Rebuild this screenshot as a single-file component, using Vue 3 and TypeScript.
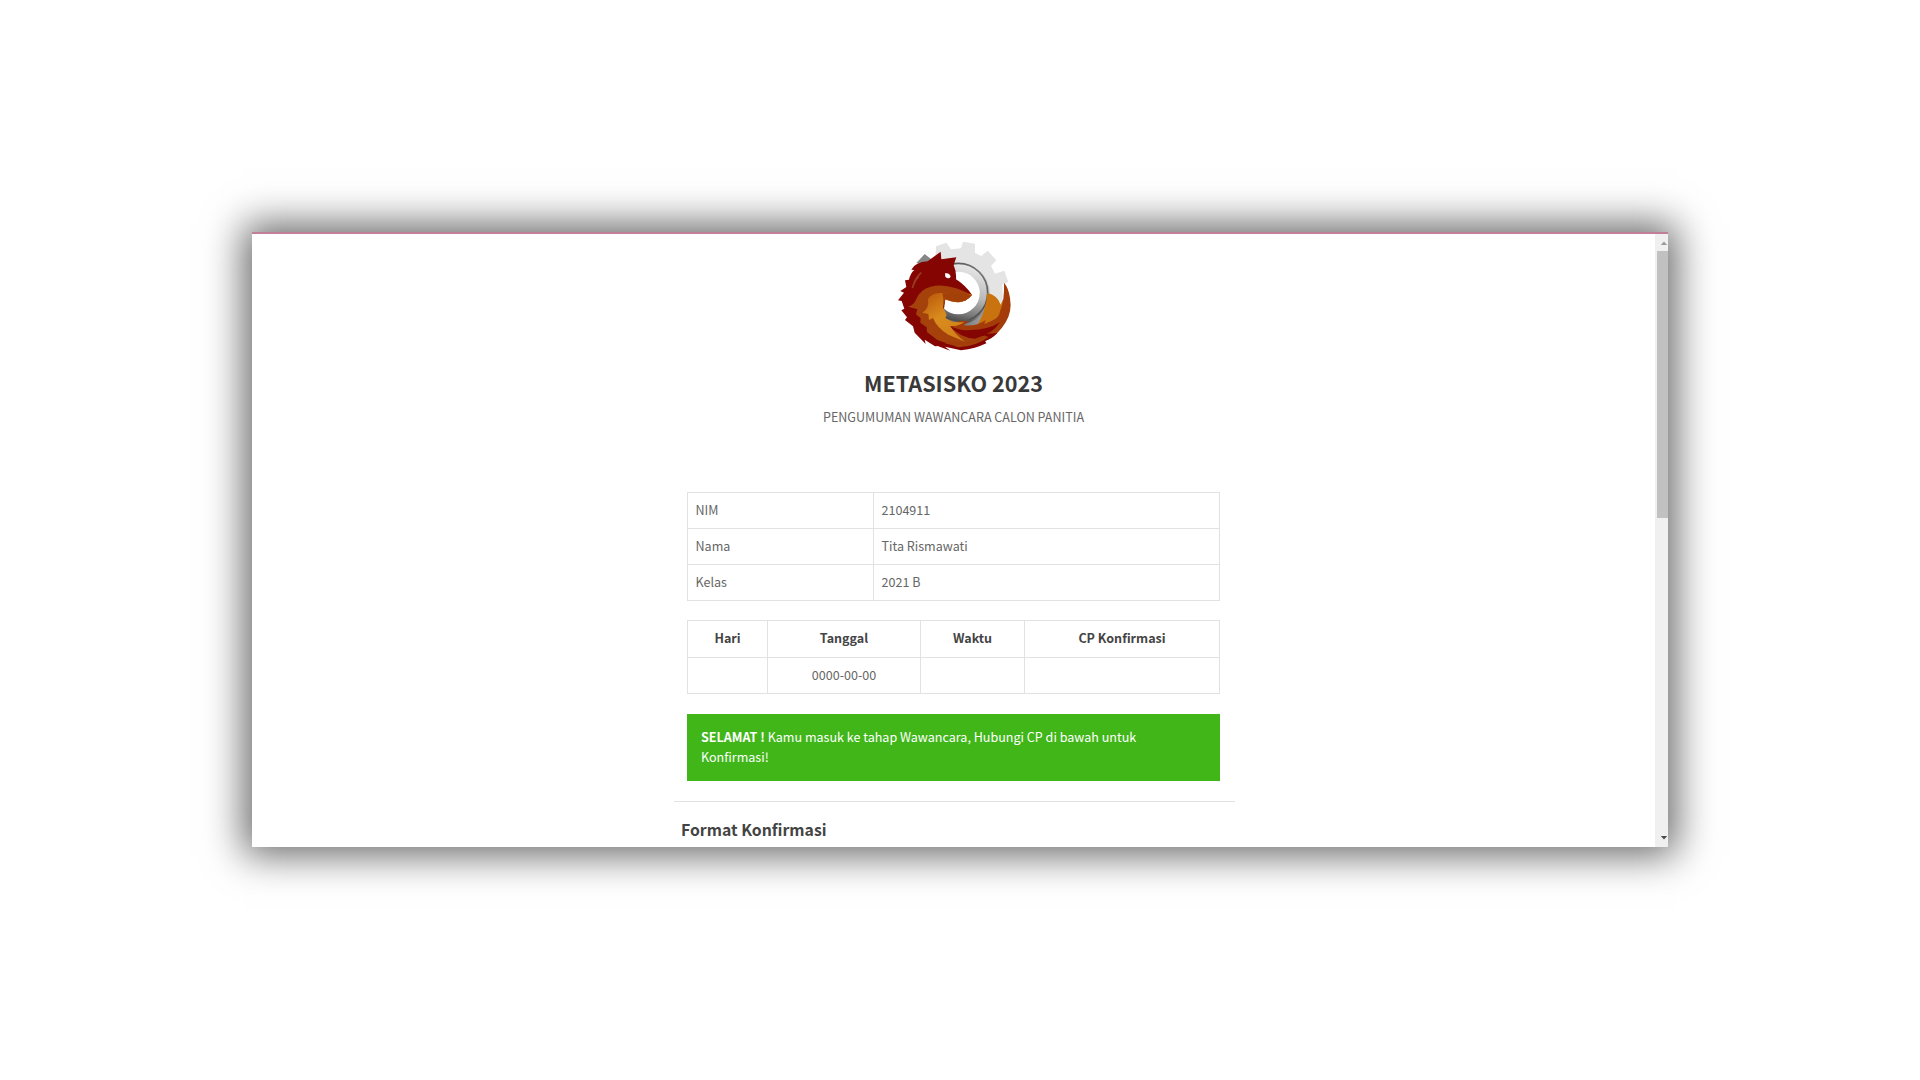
<script setup lang="ts">
interface Detail {
  label: string
  value: string
}

const details: Detail[] = [
  { label: 'NIM', value: '2104911' },
  { label: 'Nama', value: 'Tita Rismawati' },
  { label: 'Kelas', value: '2021 B' },
]

const schedule = {
  headers: ['Hari', 'Tanggal', 'Waktu', 'CP Konfirmasi'],
  cells: ['', '0000-00-00', '', ''],
}
</script>

<template>
  <div class="page">
    <div class="window">
      <main class="content">
        <svg class="logo" viewBox="0 12 420 354" aria-hidden="true">
          <defs>
            <linearGradient id="ring" x1="0.6" y1="0" x2="0.35" y2="1">
              <stop offset="0" stop-color="#e4e4e4" />
              <stop offset="0.5" stop-color="#b9b9b9" />
              <stop offset="0.85" stop-color="#777" />
              <stop offset="1" stop-color="#4c4c4c" />
            </linearGradient>
            <linearGradient id="arc" x1="0" y1="0" x2="1" y2="1">
              <stop offset="0" stop-color="#444" />
              <stop offset="0.5" stop-color="#777" />
              <stop offset="1" stop-color="#444" />
            </linearGradient>
            <linearGradient id="base" x1="0" y1="0" x2="1" y2="0">
              <stop offset="0" stop-color="#4c4c4c" />
              <stop offset="0.6" stop-color="#858585" />
              <stop offset="1" stop-color="#a8a8a8" />
            </linearGradient>
            <linearGradient id="gold" x1="0" y1="0" x2="0.7" y2="1">
              <stop offset="0" stop-color="#b85208" />
              <stop offset="0.5" stop-color="#d98c1e" />
              <stop offset="1" stop-color="#d18017" />
            </linearGradient>
          </defs>
          <path fill="#e4e4e4" d="M153 49 L184 38 L198 58 L228 55 L234 35 L270 41 L270 69 L289 78 L308 62 L334 91 L318 108 L330 131 L358 122 L370 156 L352 164 L354 225 L290 280 L175 260 L150 120 Z" />
          <path fill="#878787" d="M94 99 L119 72 L139 88 L130 105 Z" />
          <path fill="url(#base)" d="M170 225 L300 235 L307 250 L285 300 L190 298 Z" />
          <circle cx="220" cy="189" r="79" fill="none" stroke="url(#ring)" stroke-width="31" />
          <circle cx="220" cy="188" r="88" fill="none" stroke="url(#arc)" stroke-width="5" />
          <circle cx="220" cy="189" r="64" fill="#fff" />
          <path fill="#c97310" d="M307 189 Q338 196 347 224 L356 205 L350 255 L300 302 L225 300 L278 284 Q303 241 307 189 Z" />
          <path fill="#a33c08" d="M357 158 Q371 174 375 204 Q382 244 362 277 Q339 317 300 334 L228 351 L185 325 L197 286 L225 272 L251 274 L236 286 Q275 290 302 270 L298 282 L319 273 Q344 263 345 244 Q359 213 357 158 Z" />
          <path fill="#850503" d="M167 65 L169 88 L214 82 L206 105 Q215 127 213 148 Q238 163 261 194 L240 213 L181 208 L170 288 L195 288 L214 306 L263 316 L337 309 Q318 329 300 332 L304 340 Q272 356 228 361 L180 350 L196 362 L158 348 L150 349 L119 329 L122 342 L89 308 L84 289 L60 270 L66 262 L49 241 L58 236 L50 213 L39 211 L57 188 L46 183 L64 171 L60 151 L72 149 Q76 130 88 120 L79 119 Q91 96 128 94 Z" />
          <path fill="#a5420b" d="M94 207 Q106 178 137 170 Q170 161 211 174 Q239 184 261 194 Q249 211 222 217 Q200 218 182 205 L170 250 L181 283 L218 307 L276 316 L311 320 Q278 347 220 352 L157 330 L126 306 L125 292 L106 278 L107 265 L93 253 L97 238 L70 230 Q87 225 94 207 Z" />
          <path fill="url(#gold)" d="M129 207 Q141 187 169 189 Q211 188 241 195 Q261 190 261 194 Q246 214 220 216 Q193 217 175 204 L174 232 L185 255 L181 264 Q205 281 238 275 Q220 290 196 288 Q210 314 240 335 L190 314 Q156 294 144 264 L132 270 L130 252 L112 248 Q133 237 129 207 Z" />
          <path fill="#a33f08" d="M172 190 Q225 187 261 194 Q248 213 220 217 Q195 215 175 204 Z" />
          <path fill="#850503" d="M195 288 Q222 303 257 300 Q309 300 345 277 Q323 312 270 326 Q225 324 195 288 Z" />
          <path fill="none" stroke="#a33d0a" stroke-width="8" d="M183 337 Q248 350 301 319" />
          <path fill="none" stroke="#a15c39" stroke-width="5" opacity="0.65" d="M109 128 Q92 143 85 165 M101 139 Q90 150 82 174" />
          <path fill="#fff" d="M180 130 Q194 127 197 140 Q191 149 181 140 Z" />
        </svg>

        <h1 class="title">METASISKO 2023</h1>
        <p class="subtitle">PENGUMUMAN WAWANCARA CALON PANITIA</p>

        <table class="details">
          <colgroup>
            <col class="details-label" />
            <col />
          </colgroup>
          <tbody>
            <tr v-for="row in details" :key="row.label">
              <td>{{ row.label }}</td>
              <td>{{ row.value }}</td>
            </tr>
          </tbody>
        </table>

        <table class="schedule">
          <colgroup>
            <col class="day" />
            <col class="date" />
            <col class="time" />
            <col />
          </colgroup>
          <thead>
            <tr>
              <th v-for="header in schedule.headers" :key="header">{{ header }}</th>
            </tr>
          </thead>
          <tbody>
            <tr>
              <td v-for="(cell, i) in schedule.cells" :key="i">{{ cell }}</td>
            </tr>
          </tbody>
        </table>

        <div class="alert"><strong>SELAMAT !</strong> Kamu masuk ke tahap Wawancara, Hubungi CP di bawah untuk Konfirmasi!</div>

        <hr class="divider" />
        <h2 class="section-title">Format Konfirmasi</h2>
      </main>

      <div class="scrollbar">
        <svg class="arrow" viewBox="0 0 8 5"><path fill="#9b9b9b" d="M0 5 L4 0.5 L8 5 Z" /></svg>
        <div class="thumb"></div>
        <svg class="arrow down" viewBox="0 0 8 5"><path fill="#4c4c4c" d="M0 0 L4 4.5 L8 0 Z" /></svg>
      </div>
    </div>
  </div>
</template>

<style>
body {
  margin: 0;
  background: #fff;
}
</style>

<style scoped>
.page {
  width: 1920px;
  height: 1080px;
  box-sizing: border-box;
  padding: 232px 252px 0;
  overflow: hidden;
  background: #fff;
  font-family: 'Noto Sans CJK SC', 'Noto Sans', sans-serif;
  font-size: 12.55px;
  color: #666;
}

.window {
  display: flex;
  justify-content: space-between;
  width: 1416px;
  height: 615px;
  box-sizing: border-box;
  border-top: 2px solid #c27f98;
  background: #fff;
  box-shadow: 0 0 37px 8px rgba(0, 0, 0, 0.6);
}

.content {
  display: flex;
  flex-direction: column;
  width: 561px;
  height: 613px;
  margin-left: 422px;
  overflow: hidden;
}

.logo {
  flex: none;
  width: 140px;
  height: 118px;
  margin-left: 211px;
}

.title {
  margin: 15px 0 0;
  padding-right: 2px;
  font-size: 21.6px;
  line-height: 32px;
  font-weight: 700;
  text-align: center;
  color: #393939;
}

.subtitle {
  margin: 8px 0 0;
  padding-right: 2px;
  line-height: 20px;
  text-align: center;
}

table {
  flex: none;
  width: 533px;
  margin-left: 13px;
  border-collapse: collapse;
  table-layout: fixed;
}

th,
td {
  box-sizing: border-box;
  border: 1px solid #e2e2e2;
  padding: 0 8px;
  line-height: 20px;
}

th {
  font-weight: 700;
  color: #444;
}

.details {
  margin-top: 65px;
}

.details td {
  height: 36px;
  padding: 0 8px 2px 7.5px;
}

.details-label {
  width: 186px;
}

.schedule {
  margin-top: 19px;
  text-align: center;
}

.schedule th {
  height: 37px;
  padding-bottom: 2px;
}

.schedule td {
  height: 36px;
  padding-bottom: 2px;
}

.day {
  width: 80px;
}

.date {
  width: 153px;
}

.time {
  width: 104px;
}

.alert {
  flex: none;
  box-sizing: border-box;
  width: 533px;
  height: 67px;
  margin: 20px 0 0 13px;
  padding: 13px 60px 0 14px;
  background: #40b619;
  color: #fff;
  line-height: 20px;
}

.alert strong {
  font-weight: 700;
}

.divider {
  flex: none;
  width: 561px;
  height: 1px;
  margin: 20px 0 0;
  border: 0;
  background: #e2e2e2;
}

.section-title {
  margin: 16px 0 0 7px;
  font-size: 15.8px;
  line-height: 24px;
  font-weight: 700;
  color: #444;
}

.scrollbar {
  display: flex;
  flex-direction: column;
  align-items: flex-end;
  width: 13px;
  background: #f0f0f0;
}

.arrow {
  display: block;
  flex: none;
  width: 8px;
  height: 4px;
  margin-top: 7px;
}

.thumb {
  width: 11px;
  height: 267px;
  margin-top: 6px;
  background: #c1c1c1;
}

.arrow.down {
  margin-top: auto;
  margin-bottom: 7px;
}
</style>
